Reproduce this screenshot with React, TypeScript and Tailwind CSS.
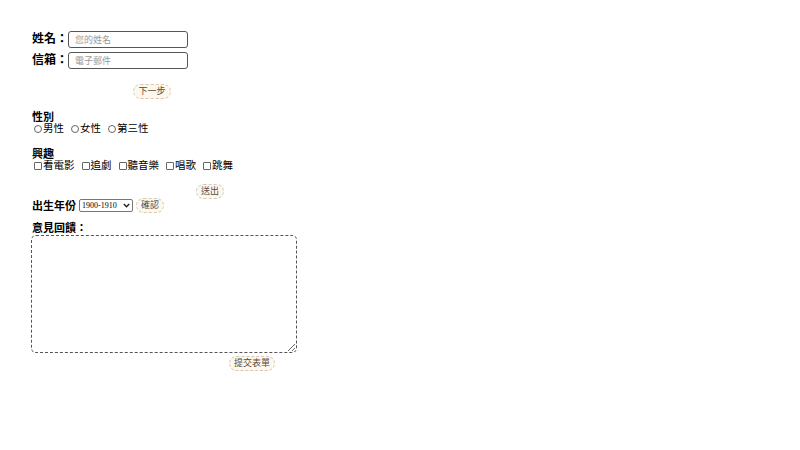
import * as React from "react";

const font = {
  fontFamily:
    '"Liberation Sans", "Noto Sans CJK TC", "Noto Sans CJK SC", sans-serif',
};

function PillButton({ label }: { label: string }) {
  return (
    <button
      type="button"
      className="h-[15px] rounded-full border border-dashed border-[#d9c7b4] bg-[#fdf8ee] px-[4px] text-[9px] leading-[13px] text-[#5b4a3a]"
    >
      {label}
    </button>
  );
}

function Radio({ label }: { label: string }) {
  return (
    <label className="flex items-center gap-[1px]">
      <span className="ml-[2px] h-[8px] w-[8px] rounded-full border border-[#666] bg-white" />
      <span>{label}</span>
    </label>
  );
}

function Check({ label }: { label: string }) {
  return (
    <label className="flex items-center gap-[1px]">
      <span className="ml-[2px] h-[8px] w-[8px] rounded-[1px] border border-[#666] bg-white" />
      <span>{label}</span>
    </label>
  );
}

export default function App() {
  return (
    <div
      className="h-[450px] w-[800px] bg-white pl-[32px] pt-[31px] text-black"
      style={font}
    >
      {/* basic info */}
      <div className="flex flex-col gap-[4px]">
        <div className="flex items-center">
          <span className="w-[36px] text-[12px] font-bold leading-[17px]">姓名：</span>
          <input
            className="h-[17px] w-[120px] rounded-[3px] border-[1.5px] border-[#555] px-[6px] text-[9px] outline-none placeholder:text-[#999]"
            placeholder="您的姓名"
          />
        </div>
        <div className="flex items-center">
          <span className="w-[36px] text-[12px] font-bold leading-[17px]">信箱：</span>
          <input
            className="h-[17px] w-[120px] rounded-[3px] border-[1.5px] border-[#555] px-[6px] text-[9px] outline-none placeholder:text-[#999]"
            placeholder="電子郵件"
          />
        </div>
      </div>
      <div className="mt-[15px] flex w-[240px] justify-center">
        <PillButton label="下一步" />
      </div>

      {/* gender */}
      <div className="mt-[13px] text-[11px] font-bold leading-[11px]">性別</div>
      <div className="flex items-center gap-[5px] text-[10.5px] leading-[11px]">
        <Radio label="男性" />
        <Radio label="女性" />
        <Radio label="第三性" />
      </div>

      {/* hobbies */}
      <div className="mt-[15px] text-[11px] font-bold leading-[11px]">興趣</div>
      <div className="flex items-center gap-[5px] text-[10.5px] leading-[11px]">
        <Check label="看電影" />
        <Check label="追劇" />
        <Check label="聽音樂" />
        <Check label="唱歌" />
        <Check label="跳舞" />
      </div>
      <div className="mt-[13px] flex w-[192px] justify-end">
        <PillButton label="送出" />
      </div>

      {/* birth year */}
      <div className="-mt-[1px] flex items-center gap-[3px]">
        <span className="text-[11px] font-bold leading-[14px]">出生年份</span>
        <div className="relative">
          <select
            className="block h-[13px] w-[54px] appearance-none rounded-[2px] border border-[#777] bg-white pl-[2px] text-[8px] leading-[11px] outline-none"
            style={{ fontFamily: '"Liberation Serif", serif' }}
            defaultValue="1900-1910"
          >
            <option>1900-1910</option>
          </select>
          <svg
            className="pointer-events-none absolute right-[3px] top-[4px] h-[5px] w-[7px]"
            viewBox="0 0 7 5"
            fill="none"
            stroke="#222"
            strokeWidth="1.4"
          >
            <path d="M0.8 1 L3.5 3.8 L6.2 1" />
          </svg>
        </div>
        <PillButton label="確認" />
      </div>

      {/* feedback */}
      <div className="mt-[9px] text-[11px] font-bold leading-[13px]">意見回饋：</div>
      <textarea className="block h-[118px] w-[266px] -ml-[1px] rounded-[5px] border border-dashed border-[#555] outline-none" />
      <div className="mt-[3px] flex w-[243px] justify-end">
        <PillButton label="提交表單" />
      </div>
    </div>
  );
}
